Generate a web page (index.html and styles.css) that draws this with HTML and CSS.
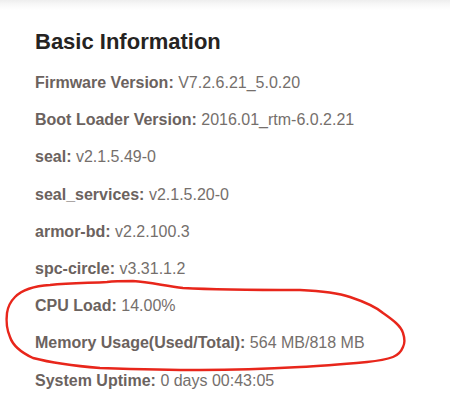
FILE: index.html
```html
<!DOCTYPE html>
<html>
<head>
<meta charset="utf-8">
<link rel="stylesheet" href="styles.css">
</head>
<body>
<div class="page">
  <h1 class="title">Basic Information</h1>
  <div class="info">
    <p class="row"><span class="label">Firmware Version:</span> <span class="value">V7.2.6.21_5.0.20</span></p>
    <p class="row"><span class="label">Boot Loader Version:</span> <span class="value">2016.01_rtm-6.0.2.21</span></p>
    <p class="row"><span class="label">seal:</span> <span class="value">v2.1.5.49-0</span></p>
    <p class="row"><span class="label">seal_services:</span> <span class="value">v2.1.5.20-0</span></p>
    <p class="row"><span class="label">armor-bd:</span> <span class="value">v2.2.100.3</span></p>
    <p class="row"><span class="label">spc-circle:</span> <span class="value">v3.31.1.2</span></p>
    <p class="row"><span class="label">CPU Load:</span> <span class="value">14.00%</span></p>
    <p class="row"><span class="label">Memory Usage(Used/Total):</span> <span class="value">564 MB/818 MB</span></p>
    <p class="row"><span class="label">System Uptime:</span> <span class="value">0 days 00:43:05</span></p>
  </div>
</div>
<svg class="scribble" width="450" height="406" viewBox="0 0 450 406">
  <path d="M15 297 C22 290 34 286 50 285 C70 283 90 283 107 282 C115 281 125 281 133 281 C150 282 165 286 183 288 C220 290 260 290 300 290 C320 291 338 293 350 297 C365 302 376 307 383 313 C393 320 401 326 403 333 C405 339 405 343 403 347 C401 352 398 355 393 357 C385 360 377 361 367 362 C345 364 322 366 300 367 C265 369 232 370 200 370 C165 370 132 369 100 368 C75 366 52 363 33 358 C20 352 13 346 10 337 C7 330 6 321 7 313 C8 306 11 301 15 297 Z" />
</svg>
</body>
</html>
```
FILE: styles.css
```css
html, body {
  margin: 0;
  padding: 0;
  background: #ffffff;
}
body {
  width: 450px;
  height: 406px;
  overflow: hidden;
  position: relative;
  font-family: "Liberation Sans", Arial, sans-serif;
  background: linear-gradient(to bottom, #eeeeee 0px, #f7f7f7 4px, #ffffff 10px);
}
.page {
  padding: 27px 0 0 35px;
}
.title {
  margin: 0 0 7px 0;
  font-size: 22px;
  line-height: 30px;
  font-weight: bold;
  color: #252322;
}
.info {
  display: flex;
  flex-direction: column;
}
.row {
  margin: 0;
  font-size: 16px;
  line-height: 37.2px;
  white-space: nowrap;
}
.label {
  font-weight: bold;
  color: #6b625e;
}
.value {
  color: #756f6c;
}
.scribble {
  position: absolute;
  left: 0;
  top: 0;
  pointer-events: none;
}
.scribble path {
  fill: none;
  stroke: #e8261b;
  stroke-width: 2.4;
  stroke-linecap: round;
  stroke-linejoin: round;
}
```
